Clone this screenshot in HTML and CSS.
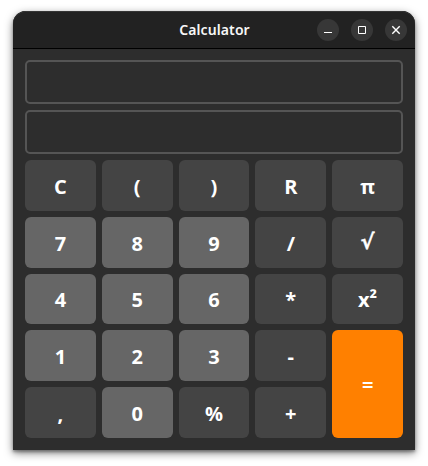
FILE: index.html
```html
<!DOCTYPE html>
<html lang="en">
<head>
<meta charset="utf-8">
<title>Calculator</title>
<link rel="stylesheet" href="styles.css">
</head>
<body>
<main class="window">
  <header class="titlebar">
    <h1 class="title">Calculator</h1>
    <div class="controls">
      <button class="control" aria-label="Minimize"><svg width="22" height="22" viewBox="0 0 22 22"><path d="M7 13.500h8"/></svg></button>
      <button class="control" aria-label="Maximize"><svg width="22" height="22" viewBox="0 0 22 22"><path d="M7.500 7.500h7v7h-7z"/></svg></button>
      <button class="control close" aria-label="Close"><svg width="22" height="22" viewBox="0 0 22 22"><path d="M7.300 7.300l7.400 7.400M14.700 7.300l-7.400 7.400"/></svg></button>
    </div>
  </header>
  <section class="body">
    <div class="display"></div>
    <div class="display"></div>
    <div class="keys">
      <button class="key">C</button>
      <button class="key">(</button>
      <button class="key">)</button>
      <button class="key">R</button>
      <button class="key">π</button>
      <button class="key digit">7</button>
      <button class="key digit">8</button>
      <button class="key digit">9</button>
      <button class="key">/</button>
      <button class="key root">√</button>
      <button class="key digit">4</button>
      <button class="key digit">5</button>
      <button class="key digit">6</button>
      <button class="key">*</button>
      <button class="key">x<span class="power">²</span></button>
      <button class="key digit">1</button>
      <button class="key digit">2</button>
      <button class="key digit">3</button>
      <button class="key">-</button>
      <button class="key equals">=</button>
      <button class="key">,</button>
      <button class="key digit">0</button>
      <button class="key">%</button>
      <button class="key">+</button>
    </div>
  </section>
</main>
</body>
</html>
```
FILE: styles.css
```css
* {
  box-sizing: border-box;
}

body {
  margin: 0;
  padding: 11px 13px 16px;
  height: 466px;
  overflow: hidden;
  background: #fff;
  font-family: "Open Sans", "Noto Sans", sans-serif;
}

button {
  border: 0;
  padding: 0;
  font: inherit;
  color: inherit;
}

.window {
  display: flex;
  flex-direction: column;
  width: 402px;
  height: 439px;
  border-radius: 13px 13px 0 0;
  background: #2d2d2d;
  color: #fff;
  box-shadow: 0 3px 9px rgba(0, 0, 0, 0.5), 0 2px 3px rgba(0, 0, 0, 0.3);
}

.titlebar {
  display: grid;
  grid-template-columns: 1fr auto 1fr;
  align-items: center;
  height: 38px;
  padding-right: 8px;
  padding-left: 8px;
  border-bottom: 1px solid #000;
  border-radius: 13px 13px 0 0;
  background: #222;
  box-shadow: inset 0 1px #353535;
}

.title {
  grid-column: 2;
  margin: 0;
  padding-left: 1px;
  font-family: "Noto Sans", sans-serif;
  font-size: 14px;
  line-height: 20px;
  font-weight: 600;
  letter-spacing: 0.1px;
  color: #f7f7f7;
}

.controls {
  display: flex;
  justify-content: flex-end;
  gap: 12px;
}

.control {
  width: 22px;
  height: 22px;
  border-radius: 50%;
  background: #373737;
}

.control svg {
  display: block;
  fill: none;
  stroke: #fff;
  stroke-width: 1;
}

.close svg {
  stroke-width: 1.4;
}

.body {
  display: flex;
  flex: 1;
  flex-direction: column;
  gap: 6px;
  padding: 11px 12px 12px;
}

.display {
  height: 44px;
  border: 2px solid #555;
  border-radius: 5px;
}

.keys {
  display: grid;
  flex: 1;
  grid-template-columns: repeat(5, 1fr);
  grid-template-rows: repeat(5, 1fr);
  gap: 6px;
}

.key {
  min-height: 0;
  padding-top: 2px;
  border-radius: 6px;
  background: #444;
  font-size: 20px;
  line-height: 27px;
  font-weight: 700;
}

.digit {
  background: #666;
}

.root {
  padding-top: 0;
  font-family: "DejaVu Sans", sans-serif;
  font-size: 21px;
  -webkit-text-stroke: 0.4px #fff;
}

.power {
  line-height: 0;
  vertical-align: 1px;
}

.equals {
  grid-row: span 2;
  padding-top: 0;
  background: #ff8000;
}
```
